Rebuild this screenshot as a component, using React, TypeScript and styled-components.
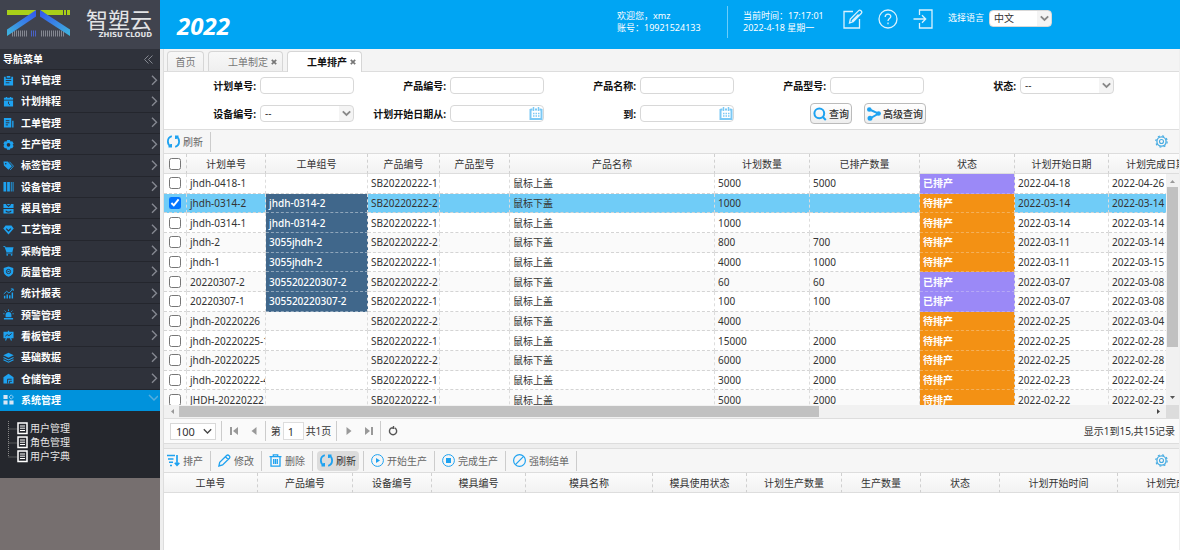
import React from "react";
import styled, { createGlobalStyle, css } from "styled-components";

const GlobalStyle = createGlobalStyle`
  * { box-sizing: border-box; }
  html, body { margin: 0; padding: 0; }
  body, button, input, select {
    font-family: "Noto Sans", "Noto Sans CJK SC", sans-serif;
    font-size: 10px;
    line-height: 14px;
    color: #333;
  }
`;

const blue = "#1ea2f0";

/* ---------- frame ---------- */

const Page = styled.div`
  display: flex;
  min-height: 100vh;
  overflow: hidden;
  background: #efefef;
`;

const Sidebar = styled.aside`
  flex: none;
  width: 160px;
  background: #766f6f;
`;

const Main = styled.div`
  flex: 1;
  min-width: 0;
  display: flex;
  flex-direction: column;
`;

/* ---------- sidebar ---------- */

const Brand = styled.div`
  display: flex;
  height: 49px;
  padding: 9px 8px 0 6px;
  background: #40434e;
`;

const BrandText = styled.div`
  flex: 1;
  display: flex;
  flex-direction: column;
  align-items: flex-end;
  color: #e3e4e6;
`;

const BrandName = styled.div`
  font-size: 22px;
  line-height: 20px;
  font-weight: 400;
  white-space: nowrap;
`;

const BrandSub = styled.div`
  margin-top: 2px;
  font: bold 7px/8px "DejaVu Sans", sans-serif;
  white-space: nowrap;
`;

const MenuTitle = styled.div`
  display: flex;
  align-items: center;
  justify-content: space-between;
  height: 21px;
  padding: 0 7px 0 3px;
  background: #2f323b;
  border-bottom: 1px solid #24262d;
  color: #fff;
  font-weight: 700;
`;

const MenuList = styled.nav`
  display: grid;
  grid-auto-rows: 1fr;
  height: 341px;
`;

const MenuItem = styled.a<{ $active?: boolean }>`
  display: flex;
  align-items: center;
  gap: 7px;
  padding: 0 2px 0 3px;
  background: ${(p) => (p.$active ? "#0092dc" : "#2f323b")};
  border-bottom: 1px solid ${(p) => (p.$active ? "#0092dc" : "#24262d")};
  color: #fff;
  font-weight: 700;
  text-decoration: none;
  overflow: hidden;

  svg:last-child {
    margin-left: auto;
  }
`;

const SubMenu = styled.ul`
  list-style: none;
  margin: 0;
  height: 67px;
  padding: 10px 0 0 8px;
  background: #25272d;
`;

const SubItem = styled.li`
  display: flex;
  align-items: center;
  height: 14px;

  a {
    margin-left: 2px;
    color: #e4e4e4;
    text-decoration: none;
  }
`;

/* ---------- header ---------- */

const Header = styled.header`
  display: flex;
  height: 49px;
  padding: 0 128px 0 17px;
  background: #00a5f3;
  color: #fff;
`;

const Year = styled.div`
  font-size: 24px;
  line-height: 51px;
  font-weight: 700;
  font-style: italic;
`;

const HeaderInfo = styled.div`
  display: flex;
  margin-left: auto;
  padding-top: 6px;
  height: 38px;
`;

const InfoBlock = styled.div<{ $width: number; $line?: boolean }>`
  width: ${(p) => p.$width}px;
  padding-top: 4px;
  font-size: 9px;
  line-height: 12px;
  white-space: nowrap;
  ${(p) => p.$line && css`border-right: 1px solid #6ccdfa;`}
`;

const TimeBlock = styled(InfoBlock)`
  margin-left: 15px;
`;

const HeaderIcons = styled.div`
  display: flex;
  align-items: center;
  gap: 15px;
  height: 26px;
`;

const IconButton = styled.button`
  display: flex;
  align-items: center;
  justify-content: center;
  padding: 0;
  border: 0;
  background: none;
  color: inherit;
`;

const Language = styled.label`
  display: flex;
  align-items: center;
  gap: 5px;
  margin-left: 15px;
  height: 24px;
  font-size: 9px;
  white-space: nowrap;
`;

/* ---------- form controls ---------- */

const SelectBox = styled.span<{ $width: number }>`
  position: relative;
  display: block;
  width: ${(p) => p.$width}px;
  height: 17px;

  select {
    appearance: none;
    display: block;
    width: 100%;
    height: 17px;
    padding: 0 16px 0 4px;
    border: 1px solid #d8d8d8;
    border-radius: 4px;
    background: linear-gradient(to left, #f4f4f4 14px, #fff 14px);
    line-height: 15px;
  }

  svg {
    position: absolute;
    right: 3px;
    top: 5px;
    pointer-events: none;
  }
`;

const PlainSelect = styled(SelectBox)`
  margin-right: 5px;

  select {
    border-radius: 0;
    background: #fff;
    font-size: 11px;
    padding-left: 5px;
  }
  svg {
    right: 4px;
  }
`;

const SearchForm = styled.form`
  display: grid;
  grid-template-columns: repeat(5, 190px);
  grid-auto-rows: 17px;
  row-gap: 11px;
  padding: 5px 0 7px;
  background: #fff;
  border-bottom: 1px solid #ddd;
`;

const Field = styled.div`
  display: flex;
  align-items: center;
  justify-content: flex-end;
  gap: 4px;

  label {
    font-weight: 700;
    color: #111;
    white-space: nowrap;
  }
`;

const TextBox = styled.span`
  position: relative;
  display: block;

  input {
    display: block;
    width: 94px;
    height: 17px;
    padding: 0 4px;
    border: 1px solid #d8d8d8;
    border-radius: 4px;
    background: #fff;
  }

  svg {
    position: absolute;
    right: 1px;
    top: 2px;
  }
`;

const FormActions = styled.div`
  grid-column: span 2;
  display: flex;
  align-items: center;
  gap: 12px;
  padding-left: 76px;
`;

const ActionButton = styled.button`
  flex: none;
  display: flex;
  align-items: center;
  gap: 2px;
  height: 21px;
  padding: 0 2px;
  border: 1px solid #bbb;
  border-radius: 4px;
  background: linear-gradient(#fff, #eee);
  font-weight: 500;
  white-space: nowrap;
`;

/* ---------- tabs ---------- */

const Workspace = styled.main`
  flex: 1;
  display: flex;
  flex-direction: column;
  margin-left: 3px;
  margin-right: 1px;
  border-left: 1px solid #ddd;
  background: #fff;
`;

const Tabs = styled.div`
  display: flex;
  gap: 4px;
  height: 23px;
  padding: 2px 0 0 3px;
  background: #f4f4f4;
  border-bottom: 1px solid #ddd;
`;

const Tab = styled.button<{ $active?: boolean; $width: number }>`
  display: flex;
  align-items: center;
  justify-content: flex-end;
  gap: 3px;
  width: ${(p) => p.$width}px;
  height: ${(p) => (p.$active ? 21 : 20)}px;
  padding: 0 5px 0 0;
  border: 1px solid #d6d6d6;
  border-bottom: 0;
  border-radius: 4px 4px 0 0;
  background: ${(p) => (p.$active ? "#fff" : "linear-gradient(#f8f8f8, #efefef)")};
  color: ${(p) => (p.$active ? "#111" : "#777")};
  font-weight: ${(p) => (p.$active ? 700 : 400)};
  white-space: nowrap;
`;

const HomeTab = styled(Tab)`
  justify-content: center;
  padding: 0;
`;

/* ---------- toolbars ---------- */

const Toolbar = styled.div`
  display: flex;
  align-items: center;
  height: 24px;
  padding: 0 11px 0 0;
  background: #f6f6f6;
  border-bottom: 1px solid #ddd;
`;

const ToolButton = styled.button<{ $pressed?: boolean }>`
  display: flex;
  align-items: center;
  gap: 3px;
  height: 20px;
  margin: 0 4px;
  padding: 0 3px;
  border: 0;
  border-radius: 4px;
  background: ${(p) => (p.$pressed ? "#dcdcdc" : "none")};
  color: ${(p) => (p.$pressed ? "#333" : "#666")};
  white-space: nowrap;

  &:first-child {
    margin-left: 0;
  }
`;

const Divider = styled.span`
  flex: none;
  width: 1px;
  height: 20px;
  background: #ccc;
`;

const Spacer = styled.span`
  flex: 1;
`;

/* ---------- data grid ---------- */

const GridArea = styled.div`
  position: relative;
  height: 251px;
  overflow: hidden;
`;

const DataTable = styled.table`
  table-layout: fixed;
  width: 1040px;
  height: 256px;
  border-collapse: separate;
  border-spacing: 0;
`;

const HeadCell = styled.th`
  height: 20px;
  padding: 0;
  font-weight: 400;
  text-align: center;
  white-space: nowrap;
  overflow: hidden;
  background: linear-gradient(#fcfcfc, #f2f2f2);
  border-right: 1px dashed #d0d0d0;
  border-bottom: 1px solid #ddd;
`;

const Row = styled.tr<{ $selected: boolean; $striped: boolean }>`
  background: ${(p) => (p.$selected ? "#70ccf7" : p.$striped ? "#fafafa" : "#fff")};
`;

const Cell = styled.td`
  padding: 0 0 0 3px;
  line-height: 16px;
  white-space: nowrap;
  overflow: hidden;
  border-right: 1px dashed #dcdcdc;
  border-bottom: 1px dashed #d4d4d4;
`;

const CheckCell = styled(Cell)`
  padding: 0;
`;

const GroupCell = styled(Cell)<{ $filled: boolean }>`
  ${(p) =>
    p.$filled &&
    css`
      background: #40678b;
      border-bottom-color: #8fa6bb;
      color: #fff;
      font-weight: 500;
    `}
`;

const StatusCell = styled(Cell)<{ $done: boolean }>`
  background: ${(p) => (p.$done ? "#9b89f7" : "#f39114")};
  border-bottom-color: ${(p) => (p.$done ? "#b5a8f5" : "#f3b05a")};
  color: #fff;
  font-weight: 700;
`;

const CheckBox = styled.input`
  display: block;
  width: 12px;
  height: 12px;
  margin: 0 auto;
`;

const VScroll = styled.div`
  position: absolute;
  right: 0;
  top: 20px;
  bottom: 0;
  width: 13px;
  display: flex;
  flex-direction: column;
  align-items: center;
  justify-content: space-between;
  padding: 5px 0;
  background: #f1f1f1;
`;

const VThumb = styled.div`
  width: 11px;
  height: 160px;
  margin: 3px 0 auto;
  background: #c1c1c1;
`;

const HScroll = styled.div`
  display: flex;
  align-items: center;
  height: 13px;
  padding-left: 6px;
  background: #f1f1f1;
`;

const HThumb = styled.div`
  width: calc(63% + 4px);
  height: 11px;
  margin: 0 auto 0 4px;
  background: #c1c1c1;
`;

const Corner = styled.div`
  width: 13px;
  height: 13px;
  margin-left: 5px;
  background: #dcdcdc;
`;

/* ---------- pager ---------- */

const Pager = styled.div`
  display: flex;
  align-items: center;
  height: 26px;
  padding: 0 4px 0 6px;
  background: #fafafa;
  border-top: 1px solid #ddd;
  border-bottom: 1px solid #ddd;
  white-space: nowrap;
`;

const PagerGroup = styled.div<{ $width: number }>`
  display: flex;
  align-items: center;
  justify-content: center;
  gap: 10px;
  width: ${(p) => p.$width}px;
  height: 20px;
  border-left: 1px solid #ccc;
  color: #999;
`;

const PageNumber = styled.label`
  display: flex;
  align-items: center;
  gap: 2px;
  color: #333;

  input {
    width: 21px;
    height: 18px;
    padding: 0 4px;
    border: 1px solid #ddd;
    background: #fff;
    font-size: 11px;
  }
`;

const Splitter = styled.div`
  height: 5px;
  background: #eee;
  border-bottom: 1px solid #ddd;
`;

const DetailArea = styled.div`
  overflow: hidden;
`;

const DetailTable = styled.table`
  table-layout: fixed;
  width: 1071px;
  border-collapse: separate;
  border-spacing: 0;
`;

/* ---------- icons ---------- */

const menuGlyphs: Record<string, React.ReactNode> = {
  order: (
    <>
      <path d="M1 2h2v2h6V2h2v9.500H1z M4 1h4v2H4z" />
      <path d="M3 6h6M3 8.500h4" stroke="#2f323b" />
    </>
  ),
  plan: (
    <>
      <path d="M1 2h2V1h1.500v1h3V1H9v1h2v2H1z M1 5h10v6.500H1z" />
      <path d="M6 6.200v2.300l1.600 1.300" stroke="#2f323b" fill="none" />
    </>
  ),
  work: (
    <>
      <path d="M1 1h8v10.500H1z M10 4h1.500v7.500H10z" />
      <path d="M3 4h4M3 6.300h4M3 8.600h2.500" stroke="#2f323b" />
    </>
  ),
  produce: (
    <path
      fillRule="evenodd"
      d="M4.500 1h3l.7 1.700 1.900-.2L11.600 5l-1.100 1.300 1.100 1.400-1.500 2.400-1.900-.1-.7 1.700h-3L3.800 10l-1.900.1L.4 7.700l1.100-1.400L.4 5l1.500-2.500 1.900.2z M6 4.400a2 2 0 1 0 0 4 2 2 0 0 0 0-4z"
    />
  ),
  tag: (
    <>
      <path fillRule="evenodd" d="M.5 1.500l4.700.2 4.600 5-3.800 4L1 6z M3 3.200a.9.9 0 1 0 0 1.800.9.9 0 0 0 0-1.800z" />
      <path d="M7 1.900l4.400 4.800-3.600 4.200" fill="none" stroke={blue} />
    </>
  ),
  device: <path d="M.5 1h3v10.500h-3z M4.500 1h3v10.500h-3z M8.500 1h1v10.500h-1z M10.500 1h1v10.500h-1z" />,
  mould: (
    <>
      <path d="M.5 1h11v4.500h-11z M.5 6.500h11v5h-11z" />
      <path d="M3.500 1.500l2.500 2 2.500-2M3 8.500c1 2 5 2 6 0" stroke="#2f323b" fill="none" strokeWidth="1.200" />
    </>
  ),
  craft: (
    <>
      <path d="M2.800 1.500h6.400L11.700 5 6 11.500.3 5z" />
      <path d="M3.500 5L6 7.600 8.500 5" stroke="#2f323b" fill="none" strokeWidth="1.300" />
    </>
  ),
  buy: (
    <>
      <path d="M.3 1h2l.5 1.500h8.700L10.300 7.500H3.700L1.600 2H.3z M3.500 8.300h7v1h-7z" />
      <circle cx="4.600" cy="10.700" r="1" />
      <circle cx="9.400" cy="10.700" r="1" />
    </>
  ),
  quality: (
    <>
      <path d="M6 .5l5.200 1.700v4c0 2.600-2.300 4.400-5.200 5.500C3.100 10.600.8 8.800.8 6.200v-4z" />
      <circle cx="6" cy="6" r="2.300" stroke="#2f323b" fill="none" />
      <path d="M5 6h2" stroke="#2f323b" />
    </>
  ),
  report: (
    <>
      <path d="M1 8.500h1.600v3H1z M3.800 7h1.600v4.500H3.800z M6.600 8h1.600v3.500H6.600z M9.400 5H11v6.500H9.400z" />
      <path d="M.8 6.500L4 3.600l2.600 2L10.800 1M8.600 1h2.500v2.300" fill="none" stroke={blue} />
    </>
  ),
  alarm: (
    <>
      <path d="M2.800 9V6.500a3.200 3.200 0 0 1 6.400 0V9z M1 9.700h10v1.800H1z" />
      <path d="M6 .5v1.800M1.800 1.800L3 3M10.200 1.800L9 3M.3 5.200h1.400M10.300 5.200h1.400" stroke={blue} />
    </>
  ),
  board: (
    <>
      <path d="M.5 2h11v7H.5z M5.300.8h1.400V2H5.300z M3 9h1.300l-.8 2.500H2.200z M7.700 9H9l.8 2.500H8.500z" />
      <path d="M2.500 6.800l2-1.800 2 1.200 3-2.400" stroke="#2f323b" fill="none" />
    </>
  ),
  data: (
    <>
      <path d="M6 .8l5.700 2.700L6 6.200.3 3.500z" />
      <path d="M.5 6L6 8.600 11.500 6M.5 8.500L6 11.100l5.500-2.600" fill="none" stroke={blue} strokeWidth="1.200" />
    </>
  ),
  store: (
    <>
      <path d="M.5 4.500L6 .8l5.500 3.700v7H.5z" />
      <path d="M5 11.500V6.800h4.500M7.200 11.500V9h2.500" stroke="#2f323b" fill="none" />
    </>
  ),
  system: (
    <>
      <path d="M.5 1h4.500v4.500H.5z M.5 7h4.500v4.500H.5z M7 7h4.500v4.500H7z" fill="#d8e6f5" />
      <path d="M9 .9l2.300 2.400L9 5.700 6.700 3.300z" fill="none" stroke="#9fd4f5" />
    </>
  ),
};

const MenuIcon = ({ name }: { name: string }) => (
  <svg width="11" height="11" viewBox="0 0 12 12" fill={blue} aria-hidden="true">
    {menuGlyphs[name]}
  </svg>
);

const Chevron = ({ down }: { down?: boolean }) =>
  down ? (
    <svg width="10" height="11" viewBox="0 0 10 11" fill="none" stroke="#56aede" strokeWidth="1.500">
      <path d="M1 1l5 5 4-4" />
    </svg>
  ) : (
    <svg width="7" height="11" viewBox="0 0 7 11" fill="none" stroke="#858891" strokeWidth="1.400">
      <path d="M1 .8l4.500 4.500L1 9.800" />
    </svg>
  );

const DownArrow = ({ color = "#888", width = 1.8 }: { color?: string; width?: number }) => (
  <svg width="9" height="7" viewBox="0 0 9 7" fill="none" stroke={color} strokeWidth={width}>
    <path d="M.8 1.300l3.700 3.700L8.200 1.300" />
  </svg>
);

const LogoMark = () => (
  <svg width="65" height="30" viewBox="0 0 65 30" aria-hidden="true">
    <defs>
      <linearGradient id="legLeft" x1="1" y1="0" x2="0" y2="1">
        <stop offset="0" stopColor="#3355ee" />
        <stop offset="1" stopColor="#3fb7dd" />
      </linearGradient>
      <linearGradient id="legRight" x1="0" y1="0" x2="1" y2="1">
        <stop offset="0" stopColor="#3355ee" />
        <stop offset="1" stopColor="#3fb7dd" />
      </linearGradient>
    </defs>
    <path d="M6 24.500h16M35 24.500h23" stroke="#858892" strokeWidth="6" strokeDasharray="1 1" />
    <path d="M25 24.500h6" stroke="#4a63c8" strokeWidth="6" strokeDasharray="1 1" />
    <path d="M1 1h29v2l-6 3H1z" fill="#a9d018" />
    <path d="M34 1h23v5H41z M58 1h2v5h-2z M61 1h3v5h-3z" fill="#a9d018" />
    <path d="M30 1v6.500L1 27v-6.500z" fill="url(#legLeft)" />
    <path d="M34 1v6.500L64 27v-6.500z" fill="url(#legRight)" />
  </svg>
);

const RefreshIcon = () => (
  <svg width="13" height="13" viewBox="0 0 13 13" fill="none" stroke={blue} strokeWidth="1.800">
    <path d="M4.800 1.200C2.200 2 .9 4 .9 6.500c0 2.300 1 3.800 2.600 4.900M1.500 11.600h2.600V9" />
    <path d="M8.200 11.800c2.600-.8 3.900-2.800 3.900-5.300 0-2.300-1-3.800-2.600-4.900M11.500 1.400H8.900V4" />
  </svg>
);

const GearIcon = () => (
  <svg width="13" height="13" viewBox="0 0 13 13" fill="none" stroke="#45abe2">
    <circle cx="6.500" cy="6.500" r="4.600" strokeWidth="1.300" />
    <circle cx="6.500" cy="6.500" r="5.700" strokeWidth="1.200" strokeDasharray="2 2.480" />
    <circle cx="6.500" cy="6.500" r="2" strokeWidth="1.100" />
  </svg>
);

const CalendarIcon = () => (
  <svg width="14" height="13" viewBox="0 0 14 13" fill="none" stroke="#7cc9f5">
    <path d="M1.500 2.500h2M6 2.500h2M10.500 2.500h2M1.500 2v10h11V2" strokeWidth="2" />
    <path d="M4.500 0v4M9.500 0v4" strokeWidth="1.500" />
    <path d="M4 6.500h7M4 9h7" strokeWidth="1.500" strokeDasharray="1.500 1" />
  </svg>
);

const SearchIcon = () => (
  <svg width="14" height="14" viewBox="0 0 14 14" fill="none" stroke={blue} strokeWidth="2">
    <circle cx="6.300" cy="6.300" r="4.900" />
    <path d="M9.800 10l3 3" />
  </svg>
);

const ShareIcon = () => (
  <svg width="14" height="14" viewBox="0 0 14 14" stroke={blue} fill={blue} strokeWidth="2">
    <path d="M2.500 2.500L11.500 6.500L3 11.500" fill="none" />
    <circle cx="2.300" cy="2.500" r="1.300" />
    <circle cx="11.600" cy="6.500" r="1.300" />
    <circle cx="3" cy="11.300" r="1.500" />
  </svg>
);

const SortIcon = () => (
  <svg width="13" height="13" viewBox="0 0 13 13" fill="none" stroke={blue} strokeWidth="1.400">
    <path d="M0 1.500h8M1 5h5.500M2 8.300h4M3 11.500h2" />
    <path d="M10 1v10M7.800 8.800l2.200 2.400 2.300-2.400" strokeWidth="1.700" />
  </svg>
);

const PencilIcon = () => (
  <svg width="13" height="13" viewBox="0 0 13 13" fill="none" stroke={blue} strokeWidth="1.300">
    <path d="M.9 12l.8-3.700L8.600 1.500c1.500-1.500 4.300 1 2.800 2.700L4.600 11z M7.400 2.700l2.900 2.700" />
  </svg>
);

const TrashIcon = () => (
  <svg width="13" height="13" viewBox="0 0 13 13" fill="none" stroke={blue} strokeWidth="1.300">
    <path d="M.5 2.700h12M4.300 2.500V.8h4.400v1.700M2 3v9.200h9V3M4.700 5v5M6.500 5v5M8.300 5v5" />
  </svg>
);

const CircleIcon = ({ kind }: { kind: "play" | "stop" | "ban" }) => (
  <svg width="13" height="13" viewBox="0 0 13 13" fill={blue} stroke={blue}>
    <circle cx="6.500" cy="6.500" r="5.900" fill="none" strokeWidth={kind === "ban" ? 1.2 : 1} />
    {kind === "play" && <path d="M5 4l4 2.500L5 9z" stroke="none" />}
    {kind === "stop" && <path d="M4 4h5v5H4z" stroke="none" />}
    {kind === "ban" && <path d="M10.600 2.400l-8.200 8.200" strokeWidth="1.200" />}
  </svg>
);

const Triangle = ({ d, color = "#999" }: { d: string; color?: string }) => (
  <svg width="10" height="10" viewBox="0 0 10 10" fill={color}>
    <path d={d} />
  </svg>
);

const SmallTriangle = ({ d, color }: { d: string; color: string }) => (
  <svg width="5" height="5" viewBox="0 0 5 5" fill={color}>
    <path d={d} />
  </svg>
);

const CloseMark = () => (
  <svg width="6" height="6" viewBox="0 0 6 6" stroke="#777" strokeWidth="1.700">
    <path d="M.8.8l4.400 4.400M5.200.8L.8 5.200" />
  </svg>
);

const TreeNode = ({ last }: { last: boolean }) => (
  <svg width="20" height="14" viewBox="0 0 20 14" fill="none">
    <path d={last ? "M.5 0v8H9" : "M.5 0v14M.5 8H9"} stroke="#888" strokeDasharray="1 1" />
    <path d="M10 2h9v10.500h-9z" stroke="#fff" strokeWidth="1.500" fill="#25272d" />
    <path d="M12 5h5M12 7.200h5M12 9.500h5" stroke="#fff" />
  </svg>
);

/* ---------- data ---------- */

const menu: [string, string][] = [
  ["order", "订单管理"],
  ["plan", "计划排程"],
  ["work", "工单管理"],
  ["produce", "生产管理"],
  ["tag", "标签管理"],
  ["device", "设备管理"],
  ["mould", "模具管理"],
  ["craft", "工艺管理"],
  ["buy", "采购管理"],
  ["quality", "质量管理"],
  ["report", "统计报表"],
  ["alarm", "预警管理"],
  ["board", "看板管理"],
  ["data", "基础数据"],
  ["store", "仓储管理"],
  ["system", "系统管理"],
];

const planColumns: [string, number][] = [
  ["计划单号", 79],
  ["工单组号", 102],
  ["产品编号", 72],
  ["产品型号", 70],
  ["产品名称", 205],
  ["计划数量", 95],
  ["已排产数量", 110],
  ["状态", 95],
  ["计划开始日期", 94],
  ["计划完成日期", 95],
];

const plans = [
  ["jhdh-0418-1", "", "SB20220222-1", "鼠标上盖", "5000", "5000", "已排产", "2022-04-18", "2022-04-26"],
  ["jhdh-0314-2", "jhdh-0314-2", "SB20220222-2", "鼠标下盖", "1000", "", "待排产", "2022-03-14", "2022-03-14"],
  ["jhdh-0314-1", "jhdh-0314-2", "SB20220222-1", "鼠标上盖", "1000", "", "待排产", "2022-03-14", "2022-03-14"],
  ["jhdh-2", "3055jhdh-2", "SB20220222-2", "鼠标下盖", "800", "700", "待排产", "2022-03-11", "2022-03-14"],
  ["jhdh-1", "3055jhdh-2", "SB20220222-1", "鼠标上盖", "4000", "1000", "待排产", "2022-03-11", "2022-03-15"],
  ["20220307-2", "305520220307-2", "SB20220222-2", "鼠标下盖", "60", "60", "已排产", "2022-03-07", "2022-03-08"],
  ["20220307-1", "305520220307-2", "SB20220222-1", "鼠标上盖", "100", "100", "已排产", "2022-03-07", "2022-03-08"],
  ["jhdh-20220226", "", "SB20220222-2", "鼠标下盖", "4000", "", "待排产", "2022-02-25", "2022-03-04"],
  ["jhdh-20220225-1", "", "SB20220222-1", "鼠标上盖", "15000", "2000", "待排产", "2022-02-25", "2022-02-28"],
  ["jhdh-20220225", "", "SB20220222-2", "鼠标下盖", "6000", "2000", "待排产", "2022-02-25", "2022-02-28"],
  ["jhdh-20220222-4", "", "SB20220222-1", "鼠标上盖", "3000", "2000", "待排产", "2022-02-23", "2022-02-24"],
  ["JHDH-20220222", "", "SB20220222-1", "鼠标上盖", "5000", "2000", "待排产", "2022-02-22", "2022-02-23"],
];

const orderColumns: [string, number][] = [
  ["工单号", 94],
  ["产品编号", 95],
  ["设备编号", 79],
  ["模具编号", 94],
  ["模具名称", 127],
  ["模具使用状态", 94],
  ["计划生产数量", 95],
  ["生产数量", 79],
  ["状态", 79],
  ["计划开始时间", 118],
  ["计划完成时间", 117],
];

const tools: [React.ReactNode, string][] = [
  [<SortIcon />, "排产"],
  [<PencilIcon />, "修改"],
  [<TrashIcon />, "删除"],
  [<RefreshIcon />, "刷新"],
  [<CircleIcon kind="play" />, "开始生产"],
  [<CircleIcon kind="stop" />, "完成生产"],
  [<CircleIcon kind="ban" />, "强制结单"],
];

type FieldKind = "text" | "date" | "select";

const SearchField = ({ id, label, kind = "text" }: { id: string; label: string; kind?: FieldKind }) => (
  <Field>
    <label htmlFor={id}>{label}:</label>
    {kind === "select" ? (
      <SelectBox $width={94}>
        <select id={id}>
          <option>--</option>
        </select>
        <DownArrow />
      </SelectBox>
    ) : (
      <TextBox>
        <input id={id} type="text" />
        {kind === "date" && <CalendarIcon />}
      </TextBox>
    )}
  </Field>
);

export default function App() {
  return (
    <>
      <GlobalStyle />
      <Page>
        <Sidebar>
          <Brand>
            <LogoMark />
            <BrandText>
              <BrandName>智塑云</BrandName>
              <BrandSub>ZHISU CLOUD</BrandSub>
            </BrandText>
          </Brand>
          <MenuTitle>
            导航菜单
            <svg width="9" height="9" viewBox="0 0 9 9" fill="none" stroke="#858891">
              <path d="M4.500.5l-4 4 4 4M8.500.5l-4 4 4 4" />
            </svg>
          </MenuTitle>
          <MenuList>
            {menu.map(([icon, label]) => (
              <MenuItem key={icon} href="#" $active={icon === "system"}>
                <MenuIcon name={icon} />
                {label}
                <Chevron down={icon === "system"} />
              </MenuItem>
            ))}
          </MenuList>
          <SubMenu>
            {["用户管理", "角色管理", "用户字典"].map((label, i) => (
              <SubItem key={label}>
                <TreeNode last={i === 2} />
                <a href="#">{label}</a>
              </SubItem>
            ))}
          </SubMenu>
        </Sidebar>

        <Main>
          <Header>
            <Year>2022</Year>
            <HeaderInfo>
              <InfoBlock $width={111} $line>
                欢迎您，xmz
                <br />
                账号：19921524133
              </InfoBlock>
              <TimeBlock $width={100}>
                当前时间：17:17:01
                <br />
                2022-4-18 星期一
              </TimeBlock>
              <HeaderIcons>
                <IconButton aria-label="编辑">
                  <svg width="20" height="20" viewBox="0 0 20 20" fill="none" stroke="#d9f1fd" strokeWidth="1.300">
                    <path d="M10 2.500H1v16.500h15.500V10" />
                    <path d="M6.500 14l.8-4 8.400-8.400c1.300-1.300 4 1 2.700 2.600L10.200 12.600z M9 12l6.500-6.500" />
                  </svg>
                </IconButton>
                <IconButton aria-label="帮助">
                  <svg width="20" height="20" viewBox="0 0 20 20" fill="none" stroke="#d9f1fd" strokeWidth="1.300">
                    <circle cx="10" cy="10" r="9" />
                    <path d="M7.200 8c0-4 5.600-3.700 5.600-.5 0 2-2.800 2.200-2.800 4.500M10 13.500v1.800" />
                  </svg>
                </IconButton>
                <IconButton aria-label="退出">
                  <svg width="20" height="20" viewBox="0 0 20 20" fill="none" stroke="#d9f1fd" strokeWidth="1.300">
                    <path d="M6.500 6V1h12.500v18H6.500v-5M.5 10h12M9 6.300l3.700 3.700L9 13.700" />
                  </svg>
                </IconButton>
              </HeaderIcons>
              <Language>
                选择语言
                <SelectBox $width={63}>
                  <select>
                    <option>中文</option>
                  </select>
                  <DownArrow />
                </SelectBox>
              </Language>
            </HeaderInfo>
          </Header>

          <Workspace>
            <Tabs>
              <HomeTab $width={37}>首页</HomeTab>
              <Tab $width={75}>
                工单制定 <CloseMark />
              </Tab>
              <Tab $width={75} $active>
                工单排产 <CloseMark />
              </Tab>
            </Tabs>

            <SearchForm onSubmit={(e) => e.preventDefault()}>
              <SearchField id="planNo" label="计划单号" />
              <SearchField id="productNo" label="产品编号" />
              <SearchField id="productName" label="产品名称" />
              <SearchField id="productModel" label="产品型号" />
              <SearchField id="status" label="状态" kind="select" />
              <SearchField id="deviceNo" label="设备编号" kind="select" />
              <SearchField id="dateFrom" label="计划开始日期从" kind="date" />
              <SearchField id="dateTo" label="到" kind="date" />
              <FormActions>
                <ActionButton>
                  <SearchIcon />
                  查询
                </ActionButton>
                <ActionButton>
                  <ShareIcon />
                  高级查询
                </ActionButton>
              </FormActions>
            </SearchForm>

            <Toolbar>
              <ToolButton>
                <RefreshIcon />
                刷新
              </ToolButton>
              <Divider />
              <Spacer />
              <IconButton aria-label="设置">
                <GearIcon />
              </IconButton>
            </Toolbar>

            <GridArea>
              <DataTable>
                <colgroup>
                  <col width="23" />
                  {planColumns.map(([name, width]) => (
                    <col key={name} width={width} />
                  ))}
                </colgroup>
                <thead>
                  <tr>
                    <HeadCell>
                      <CheckBox type="checkbox" aria-label="全选" />
                    </HeadCell>
                    {planColumns.map(([name]) => (
                      <HeadCell key={name}>{name}</HeadCell>
                    ))}
                  </tr>
                </thead>
                <tbody>
                  {plans.map(([no, group, product, name, qty, planned, status, start, end], i) => (
                    <Row key={no} $selected={i === 1} $striped={i % 2 === 1}>
                      <CheckCell>
                        <CheckBox type="checkbox" defaultChecked={i === 1} aria-label={no} />
                      </CheckCell>
                      <Cell>{no}</Cell>
                      <GroupCell $filled={group !== ""}>{group}</GroupCell>
                      <Cell>{product}</Cell>
                      <Cell />
                      <Cell>{name}</Cell>
                      <Cell>{qty}</Cell>
                      <Cell>{planned}</Cell>
                      <StatusCell $done={status === "已排产"}>{status}</StatusCell>
                      <Cell>{start}</Cell>
                      <Cell>{end}</Cell>
                    </Row>
                  ))}
                </tbody>
              </DataTable>
              <VScroll>
                <SmallTriangle d="M0 4h5L2.500 1z" color="#999" />
                <VThumb />
                <SmallTriangle d="M0 1h5L2.500 4z" color="#555" />
              </VScroll>
            </GridArea>
            <HScroll>
              <SmallTriangle d="M4 0v5L1 2.500z" color="#999" />
              <HThumb />
              <SmallTriangle d="M1 0v5l3-2.500z" color="#444" />
              <Corner />
            </HScroll>

            <Pager>
              <PlainSelect $width={46}>
                <select aria-label="每页条数">
                  <option>100</option>
                </select>
                <DownArrow color="#444" width={1.3} />
              </PlainSelect>
              <PagerGroup $width={44}>
                <IconButton aria-label="首页">
                  <Triangle d="M1 1h2v8H1z M9 1v8L4 5z" />
                </IconButton>
                <IconButton aria-label="上一页">
                  <Triangle d="M7.500 1v8L2.500 5z" />
                </IconButton>
              </PagerGroup>
              <PagerGroup $width={71}>
                <PageNumber>
                  第
                  <input type="text" defaultValue="1" />
                  共1页
                </PageNumber>
              </PagerGroup>
              <PagerGroup $width={44}>
                <IconButton aria-label="下一页">
                  <Triangle d="M2.500 1v8l5-4z" />
                </IconButton>
                <IconButton aria-label="末页">
                  <Triangle d="M7 1h2v8H7z M1 1v8l5-4z" />
                </IconButton>
              </PagerGroup>
              <PagerGroup $width={24}>
                <IconButton aria-label="刷新">
                  <svg width="10" height="10" viewBox="0 0 10 10" fill="none" stroke="#555" strokeWidth="1.400">
                    <path d="M3.400 1.900a3.600 3.600 0 1 0 3.300 0M3.300 2H6M5.500 0v3" />
                  </svg>
                </IconButton>
              </PagerGroup>
              <Spacer />
              显示1到15,共15记录
            </Pager>

            <Splitter />

            <Toolbar>
              {tools.map(([icon, label]) => (
                <React.Fragment key={label}>
                  <ToolButton $pressed={label === "刷新"}>
                    {icon}
                    {label}
                  </ToolButton>
                  <Divider />
                </React.Fragment>
              ))}
              <Spacer />
              <IconButton aria-label="设置">
                <GearIcon />
              </IconButton>
            </Toolbar>
            <DetailArea>
              <DetailTable>
                <colgroup>
                  {orderColumns.map(([name, width]) => (
                    <col key={name} width={width} />
                  ))}
                </colgroup>
                <thead>
                  <tr>
                    {orderColumns.map(([name]) => (
                      <HeadCell key={name}>{name}</HeadCell>
                    ))}
                  </tr>
                </thead>
              </DetailTable>
            </DetailArea>
          </Workspace>
        </Main>
      </Page>
    </>
  );
}
